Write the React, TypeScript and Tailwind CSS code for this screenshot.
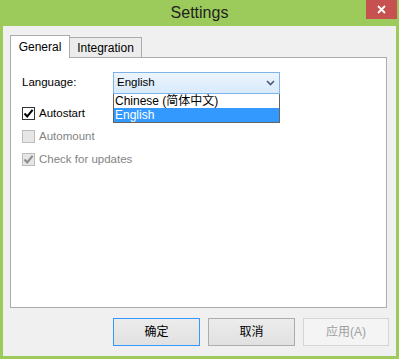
import React from "react";

const FONT = { fontFamily: '"Liberation Sans", "Noto Sans CJK SC", sans-serif' };

function Check({ color }: { color: string }) {
  return (
    <svg width="11" height="11" viewBox="0 0 11 11">
      <path d="M1.5 5.5 L4.2 8.4 L9.6 1.8" fill="none" stroke={color} strokeWidth="2" />
    </svg>
  );
}

function CheckRow({
  label,
  checked,
  disabled,
}: {
  label: string;
  checked: boolean;
  disabled?: boolean;
}) {
  return (
    <div className="flex h-[13px] items-center">
      <div
        className={`flex h-[13px] w-[13px] items-center justify-center border ${
          disabled ? "border-[#bcbcbc] bg-[#e6e6e6]" : "border-[#333333] bg-white"
        }`}
      >
        {checked && <Check color={disabled ? "#8c8c8c" : "#000000"} />}
      </div>
      <span className={`ml-[4px] text-[11.5px] ${disabled ? "text-[#838383]" : "text-black"}`}>{label}</span>
    </div>
  );
}

export default function App() {
  return (
    <div className="flex h-[359px] w-[399px] flex-col bg-[#9dcb5b]" style={FONT}>
      {/* title bar */}
      <div className="relative flex h-[26px] items-center justify-center">
        <span className="text-[16px] text-[#222222]">Settings</span>
        <div className="absolute right-[2px] top-0 flex h-[19px] w-[31px] items-center justify-center bg-[#c75050]">
          <svg width="9" height="9" viewBox="0 0 9 9">
            <path d="M1 1 L8 8 M8 1 L1 8" stroke="white" strokeWidth="1.8" />
          </svg>
        </div>
      </div>

      {/* client */}
      <div className="mx-[3px] mb-[3px] flex flex-1 flex-col bg-[#f0f0f0] px-[7px] pt-[9px]">
        <div className="flex h-[22px] items-end">
          <div className="relative z-10 -mb-px flex h-[23px] w-[60px] items-center justify-center border border-b-0 border-[#acacac] bg-white text-[12px] text-black">
            General
          </div>
          <div className="flex h-[20px] w-[72px] items-center justify-center border border-l-0 border-b-0 border-[#acacac] bg-[#ececec] text-[12px] text-black">
            Integration
          </div>
        </div>

        <div className="flex h-[251px] w-[377px] flex-col border border-[#acacac] bg-white px-[11px] pt-[14px]">
          <div className="flex h-[22px] items-center">
            <span className="w-[91px] text-[11.5px] text-black">Language:</span>
            <div className="relative h-[22px] w-[167px]">
              <div className="flex h-full items-center justify-between border border-[#7eb4ea] bg-gradient-to-b from-[#ecf4fc] to-[#d8eafc] pl-[3px] pr-[4px]">
                <span className="text-[11.5px] text-black">English</span>
                <svg width="9" height="6" viewBox="0 0 9 6">
                  <path d="M1 1 L4.5 4.5 L8 1" fill="none" stroke="#4a5a78" strokeWidth="1.6" />
                </svg>
              </div>
              <div className="absolute left-0 top-full z-20 w-[167px] border border-t-0 border-[#646464] bg-white">
                <div className="flex h-[14px] items-center pl-[1px] text-[12px] leading-none text-black">Chinese (简体中文)</div>
                <div className="flex h-[14px] items-center bg-[#3399ff] pl-[1px] text-[12px] leading-none text-white">English</div>
              </div>
            </div>
          </div>

          <div className="mt-[13px] flex flex-col gap-[10px]">
            <CheckRow label="Autostart" checked />
            <CheckRow label="Automount" checked={false} disabled />
            <CheckRow label="Check for updates" checked disabled />
          </div>
        </div>

        <div className="mt-[10px] flex justify-end gap-[8px] pr-[0px]">
          <button className="h-[28px] w-[87px] border border-[#3399ff] bg-gradient-to-b from-[#ececec] to-[#e1e1e1] text-[12px] text-black">
            确定
          </button>
          <button className="h-[28px] w-[87px] border border-[#acacac] bg-gradient-to-b from-[#ececec] to-[#e1e1e1] text-[12px] text-black">
            取消
          </button>
          <button className="h-[28px] w-[86px] border border-[#d5d5d5] bg-[#f4f4f4] text-[12px] text-[#a0a0a0]">
            应用(A)
          </button>
        </div>
      </div>
    </div>
  );
}
